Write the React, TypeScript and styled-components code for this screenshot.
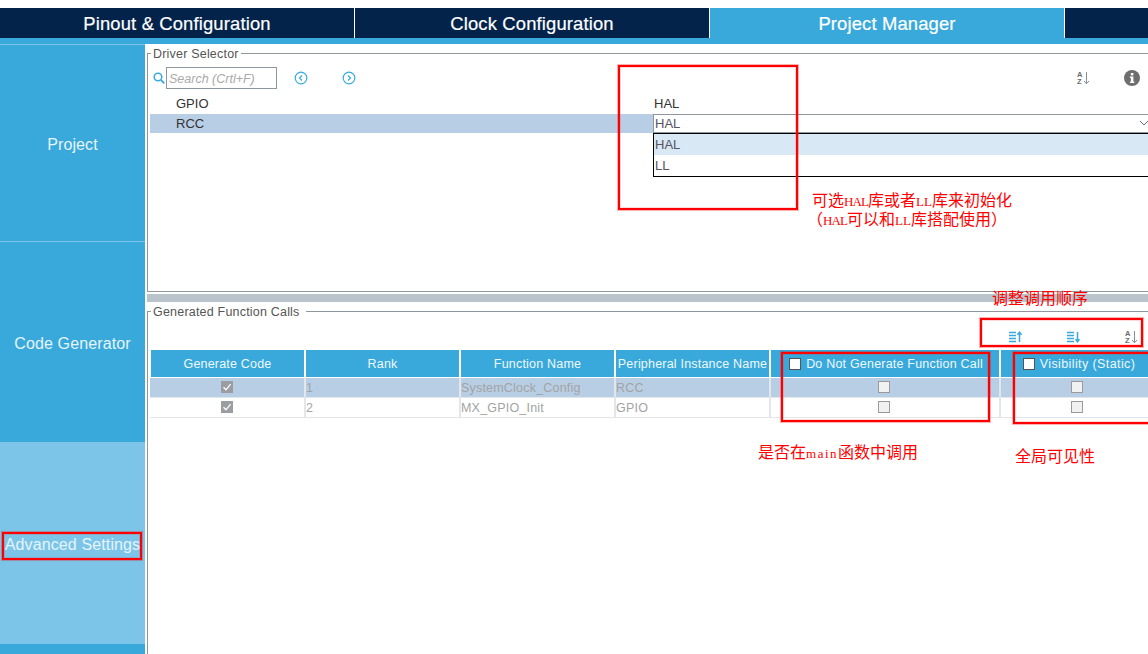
import React from "react";
import styled, { createGlobalStyle } from "styled-components";

const GlobalStyle = createGlobalStyle`
  html, body {
    margin: 0;
    padding: 0;
    background: #fff;
    overflow: hidden;
  }
  * {
    box-sizing: border-box;
  }
`;

const BLUE = "#39a9dc";
const NAVY = "#03234b";
const SELECTED = "#b8cee5";

const Page = styled.div`
  position: relative;
  width: 1148px;
  height: 654px;
  padding-top: 8px;
  overflow: hidden;
  display: flex;
  flex-direction: column;
  font-family: "Liberation Sans", Arial, sans-serif;
  font-size: 13px;
  color: #333;
`;

const Nav = styled.nav`
  flex: none;
  display: grid;
  grid-template-columns: 355px 355px 355px 1fr;
  height: 36px;
  border-bottom: 6px solid ${BLUE};
`;

const Tab = styled.div<{ $active?: boolean }>`
  display: flex;
  align-items: center;
  justify-content: center;
  height: 30px;
  padding-top: 1px;
  background: ${(p) => (p.$active ? BLUE : NAVY)};
  border-right: 1px solid #fff;
  color: #fff;
  font-size: 18.4px;
  letter-spacing: 0.15px;
  -webkit-text-stroke: 0.2px #fff;

  &:last-child {
    border-right: none;
  }
`;

const Body = styled.div`
  flex: 1;
  display: flex;
  min-height: 0;
`;

const Sidebar = styled.aside`
  flex: none;
  width: 145px;
  display: flex;
  flex-direction: column;
  background: ${BLUE};
`;

const SideItem = styled.div<{ $height: number; $active?: boolean }>`
  flex: none;
  height: ${(p) => p.$height}px;
  padding-top: 3px;
  display: flex;
  align-items: center;
  justify-content: center;
  border-top: 1px solid #7cc5e9;
  background: ${(p) => (p.$active ? "#7cc5e9" : BLUE)};
  color: #e6f4fb;
  font-size: 16px;
  letter-spacing: 0.12px;
  white-space: nowrap;
`;

const Main = styled.main`
  flex: 1;
  min-width: 0;
  padding: 1px 0 0 2px;
  display: flex;
  flex-direction: column;
`;

const Group = styled.fieldset<{ $closed?: boolean }>`
  margin: 0;
  padding: 0;
  min-width: 0;
  border: 1px solid #8f979e;
  border-right: none;
  border-bottom: ${(p) => (p.$closed ? "1px solid #8f979e" : "none")};
`;

const DriverGroup = styled(Group)`
  flex: none;
  height: 247px;
`;

const CallsGroup = styled(Group)`
  flex: 1;
  min-height: 0;
`;

const GroupTitle = styled.legend<{ $gap?: number }>`
  margin-left: 3px;
  height: 16px;
  padding: 2px ${(p) => p.$gap ?? 2}px 0 2px;
  font-size: 12.5px;
  line-height: 14px;
  color: #555;
  letter-spacing: 0.2px;
`;

const Toolbar = styled.div`
  height: 22px;
  margin: 6px 0 5px;
  padding: 0 8px 0 5px;
  display: flex;
  align-items: center;
`;

const SearchBox = styled.div`
  width: 111px;
  height: 22px;
  margin-left: 1px;
  padding-left: 2px;
  border: 1px solid #8f979e;
  color: #a9a9a9;
  font-style: italic;
  font-size: 12.5px;
  line-height: 22px;
`;

const ToolButton = styled.span<{ $left?: number }>`
  display: inline-flex;
  margin-left: ${(p) => p.$left ?? 0}px;
`;

const PushRight = styled.div`
  margin-left: auto;
  display: flex;
  align-items: center;
  gap: 33px;
`;

const DriverRow = styled.div`
  height: 20px;
  margin-left: 2px;
  display: grid;
  grid-template-columns: 503px 1fr;
  align-items: start;
`;

const DriverName = styled.div<{ $selected?: boolean }>`
  height: 19px;
  padding-left: 26px;
  line-height: 19px;
  background: ${(p) => (p.$selected ? SELECTED : "transparent")};
  color: #333;
`;

const DriverValue = styled.div`
  padding-left: 1px;
  line-height: 19px;
  color: #333;
`;

const Select = styled.div`
  position: relative;
  height: 19px;
  padding-left: 1px;
  border: 1px solid #8f979e;
  border-right: none;
  line-height: 17px;
  color: #57535f;
`;

const Chevron = styled.span`
  position: absolute;
  top: 3px;
  right: -1px;
  display: inline-flex;
`;

const Dropdown = styled.div`
  position: absolute;
  top: 18px;
  left: -1px;
  right: -1px;
  height: 44px;
  border: 1px solid #000;
  background: #fff;
`;

const Option = styled.div<{ $selected?: boolean }>`
  height: 21px;
  padding-left: 1px;
  line-height: 21px;
  background: ${(p) => (p.$selected ? "#d9e8f5" : "#fff")};
  color: #57535f;
`;

const Splitter = styled.div`
  flex: none;
  height: 8px;
  margin: 2px 0 1px;
  background: #b9c4cc;
`;

const SortBar = styled.div`
  height: 18px;
  margin: 9px 0 4px;
  padding-right: 9px;
  display: flex;
  justify-content: flex-end;
  align-items: center;
  gap: 45px;
`;

const Row = styled.div`
  margin-left: 2px;
  display: grid;
  grid-template-columns: 156px 155px 155px 155px 230px 156px;
`;

const HeadRow = styled(Row)`
  height: 27px;
  margin-bottom: 1px;
`;

const HeadCell = styled.div<{ $track?: number; $nudge?: number }>`
  margin-right: 2px;
  padding-left: ${(p) => p.$nudge ?? 0}px;
  display: flex;
  align-items: center;
  justify-content: center;
  gap: 5px;
  background: ${BLUE};
  color: #eef8fd;
  font-size: 12.5px;
  letter-spacing: ${(p) => p.$track ?? 0.2}px;
  white-space: nowrap;

  &:first-child {
    margin-left: 1px;
  }

  &:last-child {
    margin-right: 0;
  }
`;

const BodyRow = styled(Row)<{ $selected?: boolean }>`
  width: 1000px;
  height: 20px;
  border-bottom: 1px solid #e3e7eb;
  background: ${(p) => (p.$selected ? SELECTED : "#fff")};
`;

const BodyCell = styled.div<{ $center?: boolean }>`
  display: flex;
  align-items: center;
  justify-content: ${(p) => (p.$center ? "center" : "flex-start")};
  padding-right: ${(p) => (p.$center ? 2 : 0)}px;
  border-right: 2px solid #e3e7eb;
  color: #a3a3a3;
  font-size: 12.5px;
  letter-spacing: 0.2px;

  &:first-child {
    padding-right: 0;
  }

  &:last-child {
    padding-right: 4px;
    border-right: none;
  }
`;

const HeadCheck = styled.span`
  flex: none;
  width: 12px;
  height: 12px;
  background: #fff;
  border: 1px solid #555;
`;

const EmptyCheck = styled.span`
  flex: none;
  width: 12px;
  height: 12px;
  margin-bottom: 1px;
  background: #eff1f3;
  border: 1px solid #9a9a9a;
`;

const FilledCheck = styled.span`
  flex: none;
  width: 12px;
  height: 12px;
  margin-bottom: 1px;
  background: #9a9da1;
  display: inline-flex;
`;

const Mark = styled.div<{ $x: number; $y: number; $w: number; $h: number }>`
  position: absolute;
  left: ${(p) => p.$x}px;
  top: ${(p) => p.$y}px;
  width: ${(p) => p.$w}px;
  height: ${(p) => p.$h}px;
  border: 2px solid #f00;
  box-shadow: 0 0 0 1px rgba(255, 0, 0, 0.3), inset 0 0 0 1px rgba(255, 0, 0, 0.15);
  pointer-events: none;
`;

const Note = styled.div<{ $x: number; $y: number }>`
  position: absolute;
  left: ${(p) => p.$x}px;
  top: ${(p) => p.$y}px;
  font-family: "Noto Sans CJK SC", sans-serif;
  font-size: 16px;
  line-height: 20px;
  color: #f00;
  white-space: nowrap;
`;

const NoteLatin = styled.span<{ $track?: number }>`
  font-family: "Liberation Serif", serif;
  font-size: 13px;
  letter-spacing: ${(p) => p.$track ?? 0}px;
`;

const SearchIcon = () => (
  <svg width="12" height="12" viewBox="0 0 12 12" fill="none" stroke={BLUE} strokeWidth="1.5">
    <circle cx="5" cy="5" r="3.8" />
    <path d="M7.8 7.8 11.3 11.3" strokeWidth="1.8" />
  </svg>
);

const CircleArrow = ({ dir }: { dir: "left" | "right" }) => (
  <svg width="14" height="14" viewBox="0 0 14 14" fill="none" stroke={BLUE}>
    <circle cx="7" cy="7" r="5.8" strokeWidth="1.2" />
    <path d={dir === "left" ? "M8 4.5 5.5 7 8 9.5" : "M6 4.5 8.5 7 6 9.5"} strokeWidth="1.2" />
  </svg>
);

const AzIcon = ({ tone = "#8a8f94" }: { tone?: string }) => (
  <svg width="14" height="14" viewBox="0 0 14 14" fill="none">
    <text x="0" y="6" fontSize="7.5" fontWeight="700" fontFamily="Liberation Sans" fill="#6a6c70">A</text>
    <text x="0" y="13" fontSize="7.5" fontWeight="700" fontFamily="Liberation Sans" fill="#6a6c70">Z</text>
    <path d="M9.5 1v11.5M7 10l2.5 2.8L12 10" stroke={tone} strokeWidth="1" />
  </svg>
);

const InfoIcon = () => (
  <svg width="16" height="16" viewBox="0 0 16 16">
    <circle cx="8" cy="8" r="8" fill="#6e6e6e" />
    <rect x="6.8" y="3" width="2.6" height="2.4" fill="#fff" />
    <path d="M5.9 6.6h3.5v5.2h1v1.3H5.9v-1.3h1V7.9h-1z" fill="#fff" />
  </svg>
);

const SortIcon = ({ up }: { up?: boolean }) => (
  <svg width="13" height="12" viewBox="0 0 13 12" fill="none" stroke={BLUE}>
    <path d="M0 1.5h7M0 4.5h7M0 7.5h7M0 10.5h7" strokeWidth="1.4" />
    <path
      d={up ? "M10.5 11V1.5M8.5 3.8l2-2.6 2 2.6" : "M10.5 1v9.5M8.5 8.2l2 2.6 2-2.6"}
      strokeWidth="1.5"
    />
  </svg>
);

const ChevronIcon = () => (
  <svg width="10" height="10" viewBox="0 0 10 10" fill="none" stroke="#66707a">
    <path d="M1 3 5 7 9 3" />
  </svg>
);

const CheckedBox = () => (
  <FilledCheck>
    <svg width="12" height="12" viewBox="0 0 12 12" fill="none" stroke="#fff" strokeWidth="1.3">
      <path d="M2.5 6.3 5 8.8 9.6 3.2" />
    </svg>
  </FilledCheck>
);

const calls = [
  { rank: 1, name: "SystemClock_Config", peripheral: "RCC" },
  { rank: 2, name: "MX_GPIO_Init", peripheral: "GPIO" },
];

export default function App() {
  return (
    <Page>
      <GlobalStyle />
      <Nav>
        <Tab>Pinout &amp; Configuration</Tab>
        <Tab>Clock Configuration</Tab>
        <Tab $active>Project Manager</Tab>
        <Tab />
      </Nav>
      <Body>
        <Sidebar>
          <SideItem $height={197}>Project</SideItem>
          <SideItem $height={201}>Code Generator</SideItem>
          <SideItem $height={202} $active>
            Advanced Settings
          </SideItem>
        </Sidebar>
        <Main>
          <DriverGroup $closed>
            <GroupTitle>Driver Selector</GroupTitle>
            <Toolbar>
              <SearchIcon />
              <SearchBox>Search (Crtl+F)</SearchBox>
              <ToolButton $left={17}>
                <CircleArrow dir="left" />
              </ToolButton>
              <ToolButton $left={34}>
                <CircleArrow dir="right" />
              </ToolButton>
              <PushRight>
                <AzIcon />
                <InfoIcon />
              </PushRight>
            </Toolbar>
            <DriverRow>
              <DriverName>GPIO</DriverName>
              <DriverValue>HAL</DriverValue>
            </DriverRow>
            <DriverRow>
              <DriverName $selected>RCC</DriverName>
              <Select>
                HAL
                <Chevron>
                  <ChevronIcon />
                </Chevron>
                <Dropdown>
                  <Option $selected>HAL</Option>
                  <Option>LL</Option>
                </Dropdown>
              </Select>
            </DriverRow>
          </DriverGroup>
          <Splitter />
          <CallsGroup>
            <GroupTitle $gap={6}>Generated Function Calls</GroupTitle>
            <SortBar>
              <SortIcon up />
              <SortIcon />
              <AzIcon />
            </SortBar>
            <HeadRow>
              <HeadCell>Generate Code</HeadCell>
              <HeadCell>Rank</HeadCell>
              <HeadCell>Function Name</HeadCell>
              <HeadCell>Peripheral Instance Name</HeadCell>
              <HeadCell $nudge={2}>
                <HeadCheck />
                Do Not Generate Function Call
              </HeadCell>
              <HeadCell $track={0.4}>
                <HeadCheck />
                Visibility (Static)
              </HeadCell>
            </HeadRow>
            {calls.map((call, i) => (
              <BodyRow key={call.name} $selected={i === 0}>
                <BodyCell $center>
                  <CheckedBox />
                </BodyCell>
                <BodyCell>{call.rank}</BodyCell>
                <BodyCell>{call.name}</BodyCell>
                <BodyCell>{call.peripheral}</BodyCell>
                <BodyCell $center>
                  <EmptyCheck />
                </BodyCell>
                <BodyCell $center>
                  <EmptyCheck />
                </BodyCell>
              </BodyRow>
            ))}
          </CallsGroup>
        </Main>
      </Body>

      <Mark $x={618} $y={65} $w={180} $h={145} />
      <Mark $x={980} $y={318} $w={163} $h={29} />
      <Mark $x={781} $y={352} $w={209} $h={70} />
      <Mark $x={1013} $y={352} $w={140} $h={72} />
      <Mark $x={2} $y={532} $w={140} $h={28} />

      <Note $x={812} $y={189}>
        可选<NoteLatin $track={-0.9}>HAL</NoteLatin>库或者<NoteLatin>LL</NoteLatin>库来初始化
      </Note>
      <Note $x={807} $y={208}>
        （<NoteLatin $track={-0.9}>HAL</NoteLatin>可以和<NoteLatin>LL</NoteLatin>库搭配使用）
      </Note>
      <Note $x={992} $y={287}>调整调用顺序</Note>
      <Note $x={758} $y={441}>
        是否在<NoteLatin $track={1.5}>main</NoteLatin>函数中调用
      </Note>
      <Note $x={1015} $y={445}>全局可见性</Note>
    </Page>
  );
}
